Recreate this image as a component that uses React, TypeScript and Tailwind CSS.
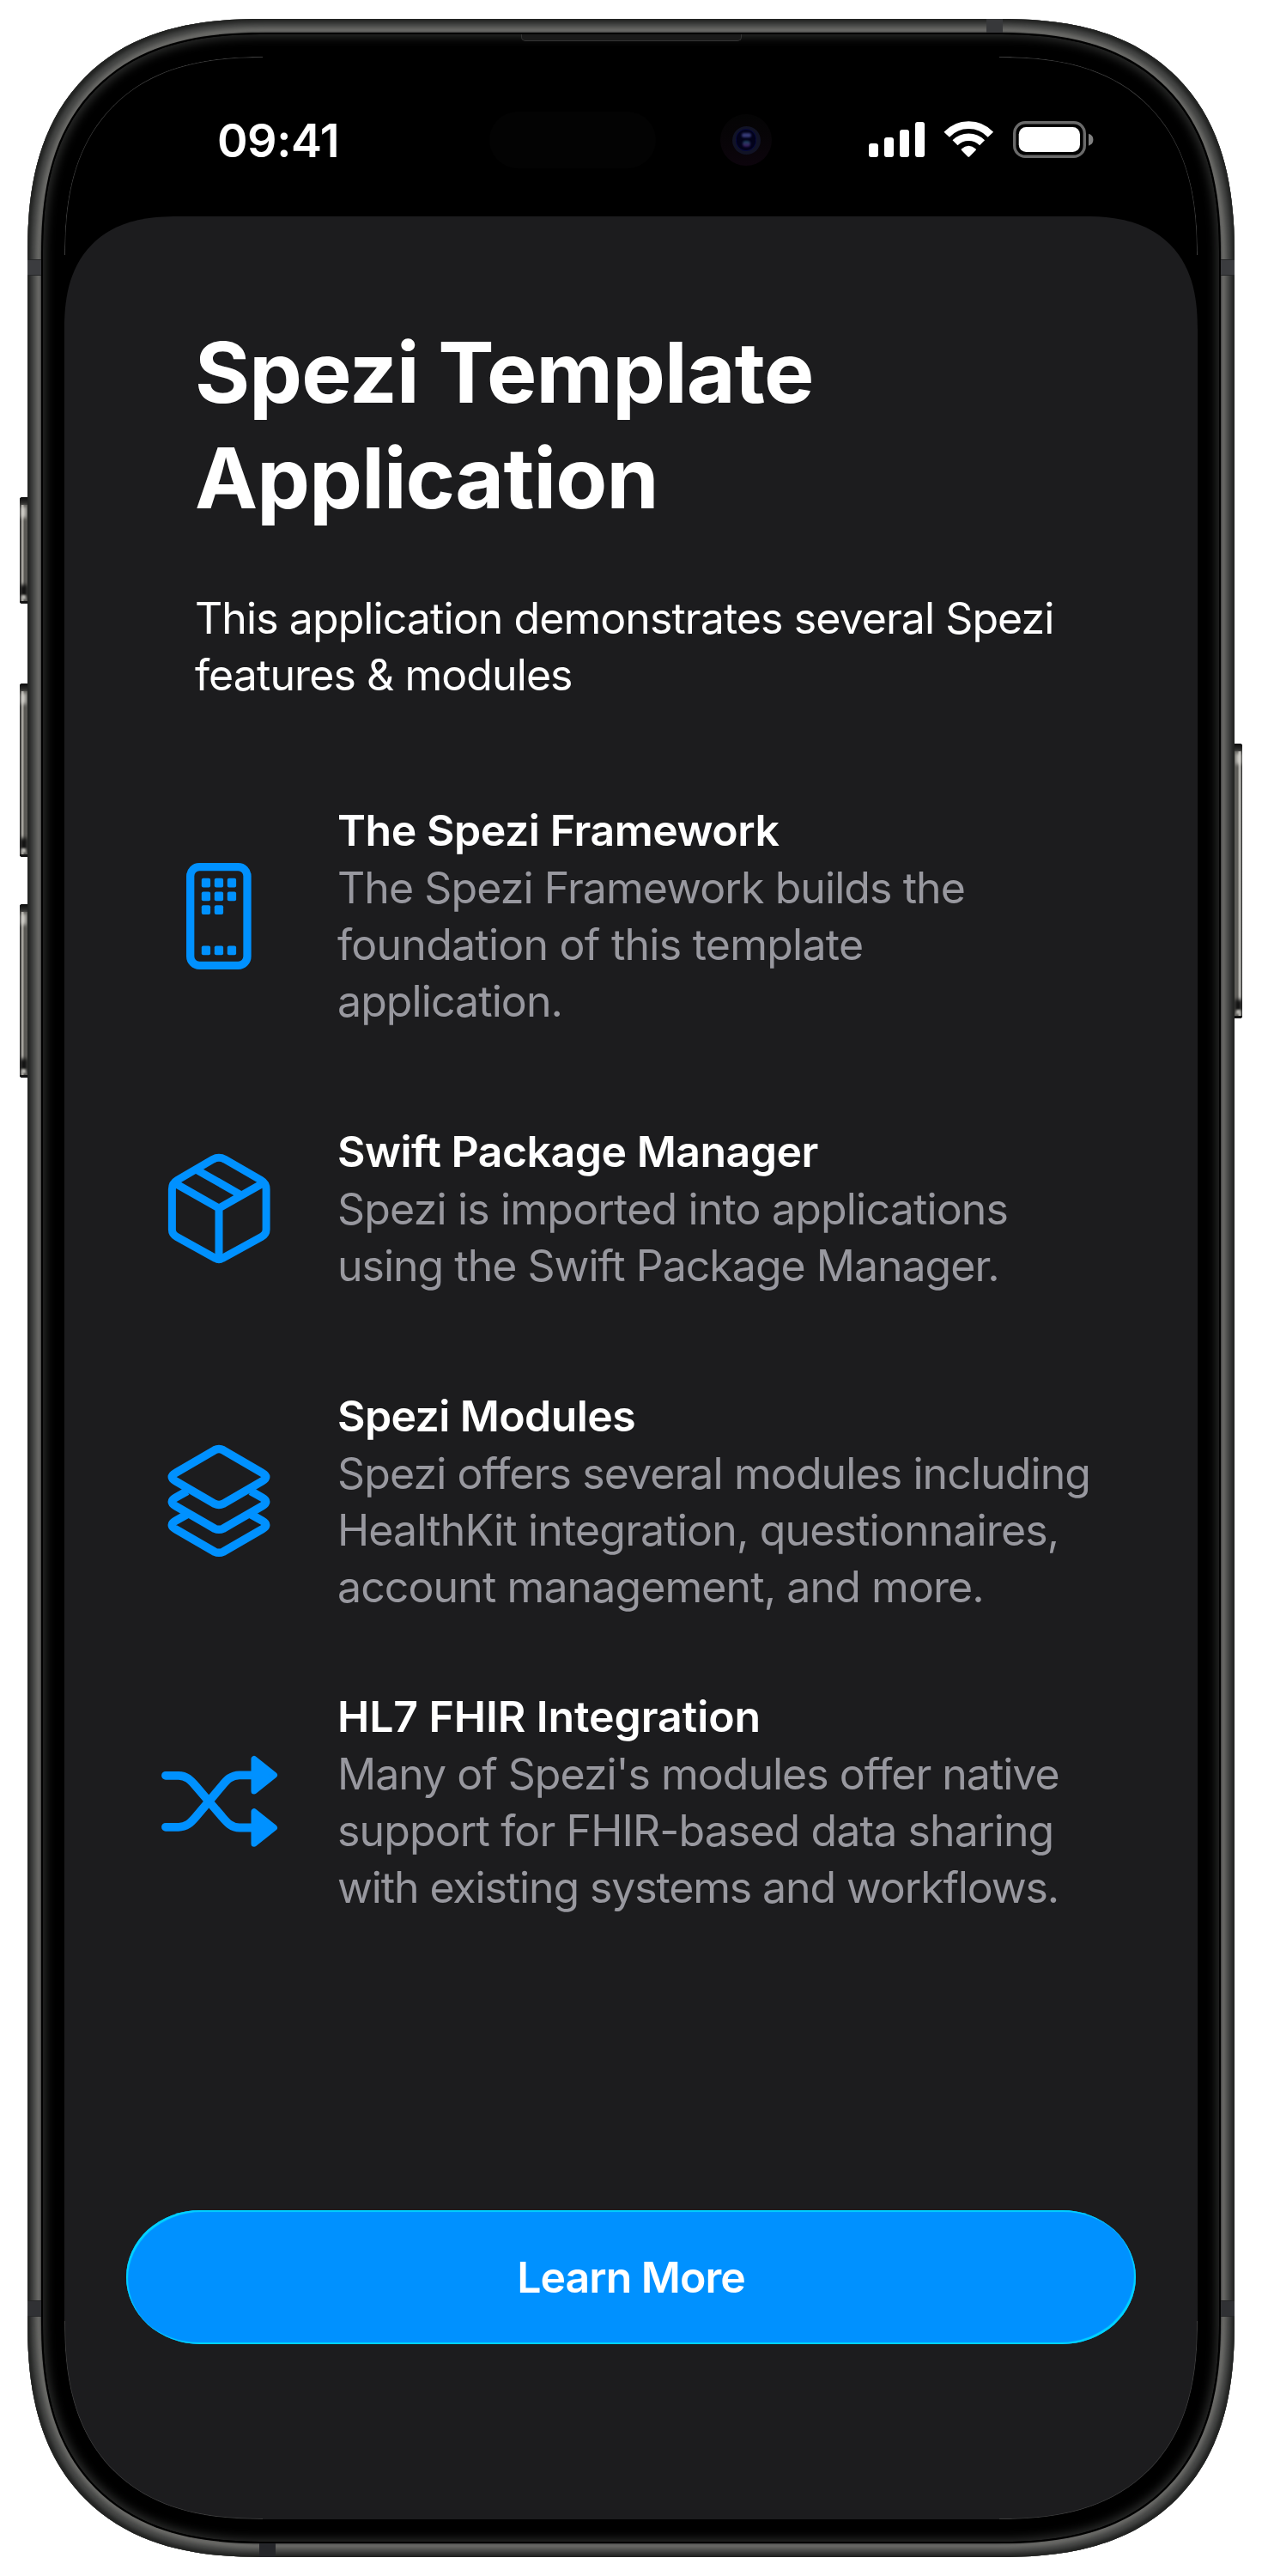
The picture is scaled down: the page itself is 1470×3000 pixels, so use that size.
import React from 'react';

type Line = { text: string; tracking: string };
type Feature = {
  id: string;
  title: string;
  titleTracking: string;
  height: string;
  iconOffset: string;
  lines: Line[];
};

const features: Feature[] = [
  {
    id: 'framework',
    title: 'The Spezi Framework',
    titleTracking: 'tracking-[-0.45px]',
    height: 'h-[374px]',
    iconOffset: 'mt-[68px]',
    lines: [
      { text: 'The Spezi Framework builds the', tracking: 'tracking-[-0.92px]' },
      { text: 'foundation of this template', tracking: 'tracking-[-0.75px]' },
      { text: 'application.', tracking: 'tracking-[-0.92px]' },
    ],
  },
  {
    id: 'package',
    title: 'Swift Package Manager',
    titleTracking: 'tracking-[-0.5px]',
    height: 'h-[308px]',
    iconOffset: 'mt-[34px]',
    lines: [
      { text: 'Spezi is imported into applications', tracking: 'tracking-[-0.82px]' },
      { text: 'using the Swift Package Manager.', tracking: 'tracking-[-1px]' },
    ],
  },
  {
    id: 'modules',
    title: 'Spezi Modules',
    titleTracking: 'tracking-[-0.6px]',
    height: 'h-[350px]',
    iconOffset: 'mt-[64px]',
    lines: [
      { text: 'Spezi offers several modules including', tracking: 'tracking-[-0.9px]' },
      { text: 'HealthKit integration, questionnaires,', tracking: 'tracking-[-0.85px]' },
      { text: 'account management, and more.', tracking: 'tracking-[-0.9px]' },
    ],
  },
  {
    id: 'fhir',
    title: 'HL7 FHIR Integration',
    titleTracking: 'tracking-[-0.1px]',
    height: 'h-[306px]',
    iconOffset: 'mt-[74px]',
    lines: [
      { text: "Many of Spezi's modules offer native", tracking: 'tracking-[-1px]' },
      { text: 'support for FHIR-based data sharing', tracking: 'tracking-[-0.88px]' },
      { text: 'with existing systems and workflows.', tracking: 'tracking-[-1.12px]' },
    ],
  },
];

const keypad = [
  [0, 0], [1, 0], [2, 0],
  [0, 1], [1, 1], [2, 1],
  [0, 2], [1, 2],
  [0, 5], [1, 5], [2, 5],
];

function FeatureIcon({ id }: { id: string }) {
  if (id === 'framework') {
    return (
      <svg className="block" width="180" height="130" viewBox="0 0 180 130" fill="none">
        <rect x="51.700" y="7.700" width="66.300" height="114.600" rx="10.500" stroke="#0091ff" strokeWidth="9.300" />
        {keypad.map(([c, r]) => (
          <rect key={`${c}-${r}`} x={64.8 + c * 15} y={20.7 + r * 15.75} width="10.300" height="10.800" rx="2" fill="#0091ff" />
        ))}
      </svg>
    );
  }
  if (id === 'package') {
    return (
      <svg className="block" width="180" height="140" viewBox="0 0 180 140" fill="none" stroke="#0091ff" strokeWidth="9">
        <path d="M78 8.200Q85 4.400 92 8.200L134 32.400Q140.100 36 140.100 43V90Q140.100 95.500 134.500 98.500L89 123.500Q85 126 81 123.500L36 98.500Q30.400 95.500 30.400 90V43Q30.400 36 36.500 32.400Z" />
        <path d="M32 35L85 65L138 35M85 65V125M59 20.300L110 49.300" />
      </svg>
    );
  }
  if (id === 'modules') {
    return (
      <svg className="block" width="180" height="140" viewBox="0 0 180 140" fill="none" stroke="#0091ff" strokeWidth="9.500">
        <path d="M80 8.800Q85 6.200 90 8.800L135.500 35.300Q144 40 135.500 44.800L90 71.300Q85 73.700 80 71.300L34.500 44.800Q26 40 34.500 35.300Z" />
        <path d="M48 56.500L34.500 64.200Q26 69 34.500 73.800L80 100.200Q85 102.500 90 100.200L135.500 73.800Q144 69 135.500 64.200L122 56.500" />
        <path d="M48 83.500L34.500 91.200Q26 96 34.500 100.800L80 127.200Q85 129.500 90 127.200L135.500 100.800Q144 96 135.500 91.200L122 83.500" />
      </svg>
    );
  }
  return (
    <svg className="block" width="180" height="120" viewBox="0 0 180 120" fill="none">
      <path d="M23 27.800H38C47 27.800 52 33 58 40L88 75C94 82 99 88.500 109 88.500H123M23 87.800H38C47 87.800 52 83 58 76L88 40.500C94 33 99 27.300 109 27.300H123" stroke="#0091ff" strokeWidth="9.800" strokeLinecap="round" />
      <path d="M126 8.500V46L149.500 27.200ZM126 69.700V107.300L149.500 88.600Z" fill="#0091ff" stroke="#0091ff" strokeWidth="7" strokeLinejoin="round" />
    </svg>
  );
}

function StatusBar() {
  return (
    <div className="flex h-[186px] shrink-0 items-start">
      <div className="ml-[178px] mt-[66px] w-[160px] text-[54px] font-semibold leading-[64px] tracking-[-0.5px] text-white">09:41</div>
      <div className="ml-[157px] mt-[64px] h-[66px] w-[194px] rounded-full bg-[#030303]" />
      <div className="ml-[75px] mt-[67px] flex h-[60px] w-[60px] items-center justify-center rounded-full bg-gradient-to-b from-[#040404] to-[#0c040c]">
        <div className="flex h-[33px] w-[33px] items-center justify-center rounded-full bg-[#111325]">
          <div className="flex h-[24px] w-[22px] flex-col items-center justify-between rounded-full bg-[#02021a] py-[4px] ring-1 ring-[#080a3c]">
            <div className="h-[5px] w-[11px] rounded-full bg-[#353975] blur-[1px]" />
            <div className="h-[7px] w-[9px] rounded-full bg-gradient-to-b from-[#10445c] to-[#3a1260] blur-[1px]" />
          </div>
        </div>
      </div>
      <svg className="ml-[112px] mt-[75px] shrink-0" width="264" height="46" viewBox="0 0 264 46" fill="none">
        <g fill="#fff">
          <rect x="1" y="26" width="11" height="16" rx="3" />
          <rect x="19" y="19" width="11" height="23" rx="3" />
          <rect x="37" y="10" width="11" height="32" rx="3" />
          <rect x="55" y="1" width="11" height="41" rx="3" />
        </g>
        <path d="M91.700 15.700A35 35 0 0 1 142.900 15.700" stroke="#fff" strokeWidth="8.800" />
        <path d="M101.500 25.300A22.200 22.200 0 0 1 133.100 25.300" stroke="#fff" strokeWidth="8.400" />
        <path d="M108.900 32.500Q117.300 25.200 125.700 32.500Q126.300 33.300 125.600 34L118.200 41.400Q117.300 42.200 116.400 41.400L109 34Q108.300 33.300 108.900 32.500Z" fill="#fff" />
        <rect x="170.700" y="1.700" width="81.600" height="39.600" rx="12.500" stroke="#6a6a6a" strokeWidth="3.400" />
        <rect x="175.700" y="7" width="71.300" height="29" rx="8.500" fill="#fff" />
        <path d="M257 14.700Q262.400 16.500 262.400 21.700T257 28.700Z" fill="#808080" />
      </svg>
    </div>
  );
}

function SideButton({ place, tone }: { place: string; tone: string }) {
  return (
    <div className={`absolute w-[9px] overflow-hidden bg-[#151515] py-px ${place}`}>
      <div className={`h-full ${tone}`} />
      <div className="absolute inset-x-0 top-0 h-[9px] bg-gradient-to-b from-[#0c0c0c] to-[#3a3a38]" />
      <div className="absolute inset-x-[2px] top-[11px] h-[13px] bg-[#dddcd6] blur-[2px]" />
      <div className="absolute inset-x-0 bottom-[8px] h-[14px] bg-[#111111] blur-[2px]" />
      <div className="absolute inset-x-[2px] bottom-[5px] h-[5px] bg-[#b5b4af] blur-[1px]" />
      <div className="absolute inset-x-0 bottom-0 h-[3px] bg-[#141414]" />
    </div>
  );
}

const leftTone = 'bg-gradient-to-r from-[#1a1a1a] via-[#b9b7b0] via-[35%] to-[#5a5955] to-[60%]';
const rightTone = 'bg-gradient-to-l from-[#1a1a1a] via-[#d0cfc9] via-[30%] to-[#605f5b] to-[60%]';

export default function App() {
  return (
    <div className="h-[3000px] w-[1470px] overflow-hidden bg-white px-8 pt-[22px] font-[Inter,sans-serif]">
      <main className="relative h-[2956px] w-[1406px]">
        <SideButton tone={leftTone} place="left-[-9px] top-[557px] h-[124px] rounded-l-[3px]" />
        <SideButton tone={leftTone} place="left-[-9px] top-[774px] h-[202px] rounded-l-[3px]" />
        <SideButton tone={leftTone} place="left-[-9px] top-[1031px] h-[202px] rounded-l-[3px]" />
        <SideButton tone={rightTone} place="right-[-9px] top-[844px] h-[320px] rounded-r-[3px]" />

        <div className="relative h-full overflow-hidden rounded-[275px] bg-[#404140] p-4 shadow-[inset_0_0_4px_4px_#222322,inset_0_0_5px_10px_#454645,inset_0_0_2px_15px_#6c6c69] [corner-shape:superellipse(1.3)]">
          <div className="absolute left-0 top-[280px] h-[19px] w-4 border-y border-[#252627] bg-[#3b3c3f]" />
          <div className="absolute right-0 top-[280px] h-[19px] w-4 border-y border-[#252627] bg-[#3b3c3f]" />
          <div className="absolute left-0 top-[2657px] h-[19px] w-4 border-y border-[#252627] bg-[#303134]" />
          <div className="absolute right-0 top-[2657px] h-[19px] w-4 border-y border-[#252627] bg-[#303134]" />
          <div className="absolute right-[270px] top-0 h-4 w-[19px] bg-[#37383a]" />
          <div className="absolute bottom-0 left-[270px] h-4 w-[19px] bg-[#25262a]" />

          <div className="relative h-full rounded-[259px] border-2 border-black bg-black px-[25px] py-[26px] shadow-[inset_0_0_12px_3px_#2c2d2c] [corner-shape:superellipse(1.3)]">
            <div className="absolute left-[557px] top-0 h-[8px] w-[257px] rounded-b-[5px] border-x border-b border-[#333333] bg-[#1a1a1a]" />
            <div className="relative flex h-full flex-col overflow-hidden rounded-[232px] bg-black [corner-shape:superellipse(1.3)]">
              <StatusBar />
              <section className="flex min-h-0 flex-1 flex-col rounded-t-[132px] bg-[#1c1c1e] [corner-shape:superellipse(1.3)]">
                <header className="ml-[152px] mt-[120px] h-[562px] shrink-0 text-white">
                  <h1 className="text-[98px] font-bold leading-[123px] tracking-[-0.85px]">Spezi Template<br />Application</h1>
                  <p className="mt-[69px] text-[50px] leading-[66px] tracking-[-0.92px]">This application demonstrates several Spezi<br />features &amp; modules</p>
                </header>
                <div className="h-[1338px] shrink-0">
                  {features.map((f) => (
                    <article key={f.id} className={`flex items-start ${f.height}`}>
                      <div className={`ml-[95px] w-[180px] shrink-0 ${f.iconOffset}`}>
                        <FeatureIcon id={f.id} />
                      </div>
                      <div className="ml-[43px] text-[50px] leading-[66px]">
                        <h2 className={`font-semibold text-white ${f.titleTracking}`}>{f.title}</h2>
                        <p className="mt-px text-[#98989f]">
                          {f.lines.map((l) => (
                            <span key={l.text} className={`block whitespace-nowrap ${l.tracking}`}>{l.text}</span>
                          ))}
                        </p>
                      </div>
                    </article>
                  ))}
                </div>
                <button className="mx-[72px] mt-[302px] h-[156px] shrink-0 rounded-[86px/78px] bg-[#0091ff] text-[50px] font-semibold tracking-[-1px] text-white shadow-[inset_2px_2px_1px_#00d4ff,inset_-2px_-2px_1px_#00d4ff]">Learn More</button>
              </section>
              <div className="absolute left-0 top-0 h-[231px] w-[231px] rounded-tl-[231px] border-l border-t border-[#3c3c3c] [corner-shape:superellipse(1.3)] [mask-image:linear-gradient(135deg,black_50%,transparent_60%)]" />
              <div className="absolute right-0 top-0 h-[231px] w-[231px] rounded-tr-[231px] border-r border-t border-[#3c3c3c] [corner-shape:superellipse(1.3)] [mask-image:linear-gradient(225deg,black_50%,transparent_60%)]" />
              <div className="absolute bottom-0 left-0 h-[231px] w-[231px] rounded-bl-[231px] border-b border-l border-[#3c3c3c] [corner-shape:superellipse(1.3)] [mask-image:linear-gradient(45deg,black_50%,transparent_60%)]" />
              <div className="absolute bottom-0 right-0 h-[231px] w-[231px] rounded-br-[231px] border-b border-r border-[#3c3c3c] [corner-shape:superellipse(1.3)] [mask-image:linear-gradient(315deg,black_50%,transparent_60%)]" />
            </div>
          </div>
        </div>
      </main>
    </div>
  );
}
